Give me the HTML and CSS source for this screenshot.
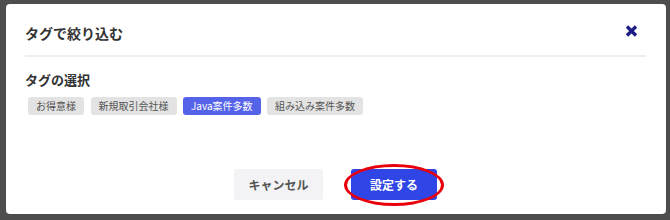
FILE: index.html
```html
<!DOCTYPE html>
<html lang="ja">
<head>
    <meta charset="UTF-8">
    <title>タグで絞り込む</title>
    <link rel="stylesheet" href="styles.css">
</head>
<body>
    <div class="modal">
        <div class="modal-header">
            <h2>タグで絞り込む</h2>
            <svg class="close" width="13" height="12" viewBox="0 0 13 12">
                <path d="M2 1.5 L11 10.5 M11 1.5 L2 10.5" stroke="#1d1d85" stroke-width="3.4" stroke-linecap="butt"/>
            </svg>
        </div>
        <div class="modal-body">
            <h3>タグの選択</h3>
            <div class="tags">
                <span class="tag">お得意様</span>
                <span class="tag">新規取引会社様</span>
                <span class="tag active">Java案件多数</span>
                <span class="tag">組み込み案件多数</span>
            </div>
        </div>
        <div class="modal-footer">
            <button class="btn cancel">キャンセル</button>
            <button class="btn submit">設定する<span class="mark"></span></button>
        </div>
    </div>
</body>
</html>
```
FILE: styles.css
```css
html, body {
    margin: 0;
    height: 100%;
}
body {
    font-family: "Noto Sans CJK JP", "Noto Sans", sans-serif;
    background-color: #4d4d4d;
    padding: 4px 4px 6px 6px;
    box-sizing: border-box;
}
.modal {
    background: white;
    border-radius: 4px;
    height: 210px;
    padding: 0 20px 0 19px;
    box-sizing: border-box;
    display: flex;
    flex-direction: column;
}
.modal-header {
    display: flex;
    align-items: center;
    justify-content: space-between;
    height: 51px;
    border-bottom: 2px solid #eeeeee;
}
.modal-header h2 {
    margin: 0;
    padding-top: 7px;
    font-size: 14px;
    font-weight: bold;
    color: #333;
}
.close {
    margin-right: 8px;
    margin-top: 2px;
}
.modal-body h3 {
    margin: 13px 0 8px 0;
    font-size: 13px;
    font-weight: bold;
    color: #333;
}
.tags {
    display: flex;
    gap: 6.5px;
    padding-left: 3px;
}
.tag {
    background-color: #e3e3e3;
    color: #555;
    font-size: 10px;
    line-height: 18px;
    padding: 0 8px;
    border-radius: 3px;
}
.tag.active {
    background-color: #5563e8;
    color: white;
}
.modal-footer {
    margin-top: auto;
    display: flex;
    justify-content: center;
    gap: 28px;
    padding: 0 0 14px 0;
}
.btn {
    font-family: inherit;
    font-size: 12px;
    font-weight: bold;
    border: none;
    border-radius: 3px;
    height: 31px;
    cursor: pointer;
}
.cancel {
    width: 89px;
    background-color: #f3f3f5;
    color: #555;
}
.submit {
    width: 86px;
    background-color: #2f45e6;
    color: white;
    position: relative;
}
.mark {
    position: absolute;
    left: -7px;
    top: -5px;
    width: 94px;
    height: 36px;
    border: 3px solid #e8000b;
    border-radius: 50%;
}
```
